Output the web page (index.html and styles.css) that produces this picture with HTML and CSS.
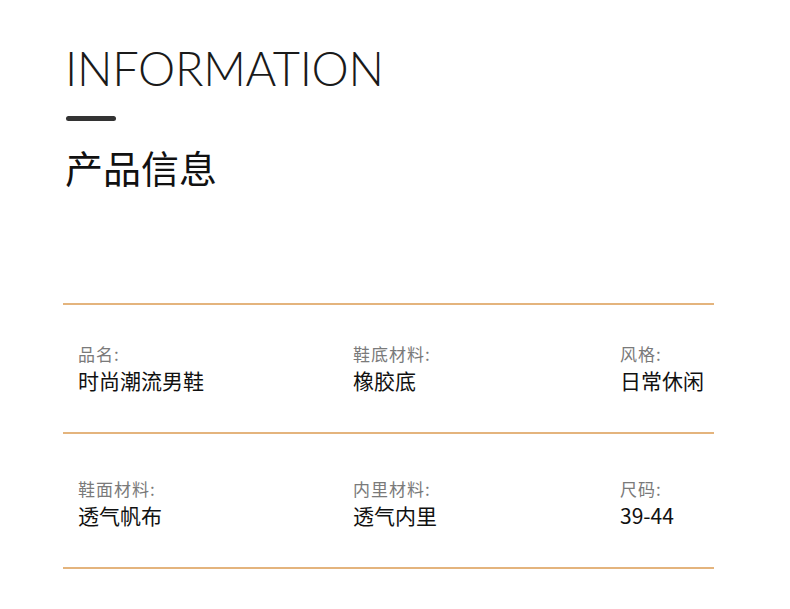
FILE: index.html
```html
<!DOCTYPE html>
<html lang="zh">
<head>
<meta charset="utf-8">
<title>产品信息</title>
<link rel="stylesheet" href="styles.css">
</head>
<body>
<div class="page">
  <header class="head">
    <h1 class="en-title">INFORMATION</h1>
    <div class="dash"></div>
    <h2 class="cn-title">产品信息</h2>
  </header>
  <section class="specs">
    <div class="row row-1">
      <div class="cell"><div class="label">品名:</div><div class="value">时尚潮流男鞋</div></div>
      <div class="cell"><div class="label">鞋底材料:</div><div class="value">橡胶底</div></div>
      <div class="cell"><div class="label">风格:</div><div class="value">日常休闲</div></div>
    </div>
    <div class="row row-2">
      <div class="cell"><div class="label">鞋面材料:</div><div class="value">透气帆布</div></div>
      <div class="cell"><div class="label">内里材料:</div><div class="value">透气内里</div></div>
      <div class="cell"><div class="label">尺码:</div><div class="value">39-44</div></div>
    </div>
    <div class="end-line"></div>
  </section>
</div>
</body>
</html>
```
FILE: styles.css
```css
html, body {
  margin: 0;
  padding: 0;
  background: #ffffff;
}
body {
  font-family: "Noto Sans CJK SC", "Noto Sans", sans-serif;
  color: #111;
}
.page {
  width: 790px;
  height: 609px;
  overflow: hidden;
}
.head {
  padding: 40px 0 0 65px;
}
.en-title {
  margin: 0;
  font-family: "Lato", "Open Sans", sans-serif;
  font-weight: 300;
  font-size: 47px;
  line-height: 56px;
  letter-spacing: -0.3px;
  color: #1a1a1a;
}
.dash {
  width: 50px;
  height: 5px;
  border-radius: 3px;
  background: #333;
  margin: 20px 0 0 1px;
}
.cn-title {
  margin: 22px 0 0 0;
  font-family: "Noto Sans CJK SC", sans-serif;
  font-weight: 400;
  font-size: 38px;
  line-height: 48px;
  color: #111;
}
.specs {
  margin: 112px 0 0 63px;
  width: 651px;
}
.row {
  border-top: 2px solid #e4b47d;
  display: grid;
  grid-template-columns: 275px 267px 1fr;
  padding-left: 15px;
}
.row-1 {
  padding-top: 39px;
  height: 88px;
}
.row-2 {
  padding-top: 45px;
  height: 88px;
}
.end-line {
  border-top: 2px solid #e4b47d;
}
.label {
  font-size: 17px;
  line-height: 20px;
  letter-spacing: 1px;
  color: #7a7a7a;
}
.value {
  font-size: 21px;
  line-height: 28px;
  color: #111;
  margin-top: 2px;
}
```
